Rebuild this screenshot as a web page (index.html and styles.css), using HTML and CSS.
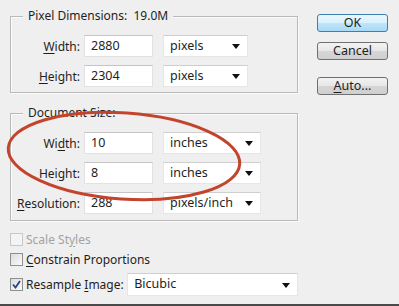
FILE: index.html
```html
<!DOCTYPE html>
<html lang="en">
<head>
    <meta charset="UTF-8" />
    <title>Image Size</title>
    <link rel="stylesheet" href="styles.css">
</head>
<body>
    <div class="dialog">
        <div class="left">
            <div class="group group-pixels">
                <span class="legend">Pixel Dimensions:&nbsp;&nbsp;19.0M</span>
                <div class="row">
                    <span class="lbl"><u>W</u>idth:</span>
                    <span class="field">2880</span>
                    <span class="select sel-short">pixels<i class="arrow"></i></span>
                </div>
                <div class="row">
                    <span class="lbl"><u>H</u>eight:</span>
                    <span class="field">2304</span>
                    <span class="select sel-short">pixels<i class="arrow"></i></span>
                </div>
            </div>

            <div class="group group-doc">
                <span class="legend">Document Size:</span>
                <div class="row">
                    <span class="lbl">Wi<u>d</u>th:</span>
                    <span class="field">10</span>
                    <span class="select">inches<i class="arrow"></i></span>
                </div>
                <div class="row">
                    <span class="lbl">Hei<u>g</u>ht:</span>
                    <span class="field">8</span>
                    <span class="select">inches<i class="arrow"></i></span>
                </div>
                <div class="row">
                    <span class="lbl"><u>R</u>esolution:</span>
                    <span class="field">288</span>
                    <span class="select">pixels/inch<i class="arrow"></i></span>
                </div>
            </div>

            <div class="checks">
                <div class="check disabled"><span class="box"></span>Scale St<u>y</u>les</div>
                <div class="check"><span class="box"></span><u>C</u>onstrain Proportions</div>
                <div class="check resample">
                    <span class="box checked">
                        <svg width="11" height="11" viewBox="0 0 11 11"><path d="M2 5.5 L4.5 8.5 L9 2" fill="none" stroke="#2a3f8f" stroke-width="1.8"/></svg>
                    </span>
                    <span class="res-lbl">Resample <u>I</u>mage:</span>
                    <span class="select sel-wide">Bicubic<i class="arrow"></i></span>
                </div>
            </div>
        </div>

        <div class="buttons">
            <span class="btn btn-default">OK</span>
            <span class="btn">Cancel</span>
            <span class="btn btn-auto"><u>A</u>uto...</span>
        </div>
    </div>
    <div class="bottom-line"></div>

    <svg class="circle" width="399" height="306" viewBox="0 0 399 306">
        <ellipse cx="124" cy="156" rx="116" ry="43" transform="rotate(4 124 156)" fill="none" stroke="#c2442c" stroke-width="3"/>
    </svg>
</body>
</html>
```

FILE: styles.css
```css
html, body {
    margin: 0;
    height: 306px;
    overflow: hidden;
}

body {
    width: 399px;
    background: #efefef;
    font-family: "Noto Sans", "Open Sans", sans-serif;
    font-size: 12px;
    color: #1e1e1e;
    position: relative;
}

u {
    text-decoration: underline;
    text-underline-offset: 2px;
}

.dialog {
    display: flex;
    padding: 14px 0 0 10px;
    height: 304px;
    box-sizing: border-box;
}

.left {
    width: 288px;
}

.group {
    position: relative;
    border: 1px solid #b9b9b9;
    box-shadow: inset 1px 1px 0 #fbfbfb, 1px 1px 0 #fbfbfb;
    padding: 18px 0 5px 0;
    display: flex;
    flex-direction: column;
    gap: 8px;
}

.group-pixels {
    margin-top: 2px;
}

.group-doc {
    margin-top: 20px;
    padding-bottom: 6px;
}

.legend {
    position: absolute;
    left: 12px;
    top: -10px;
    padding: 0 5px;
    background: #efefef;
    line-height: 18px;
}

.row {
    display: flex;
    align-items: center;
    height: 22px;
}

.lbl {
    width: 69px;
    text-align: right;
    padding-right: 4px;
}

.field {
    width: 69px;
    height: 22px;
    box-sizing: border-box;
    background: #fff;
    border: 1px solid #e2e2e2;
    border-top-color: #c4c4c4;
    padding: 0 6px;
    line-height: 20px;
    font-size: 12.5px;
}

.select {
    position: relative;
    margin-left: 10px;
    width: 98px;
    height: 22px;
    box-sizing: border-box;
    background: #fff;
    border: 1px solid #e6e6e6;
    border-top-color: #cfcfcf;
    padding: 0 6px;
    line-height: 20px;
    font-size: 12.5px;
}

.sel-short {
    width: 85px;
}

.arrow {
    position: absolute;
    right: 7px;
    top: 8px;
    width: 0;
    height: 0;
    border-left: 4px solid transparent;
    border-right: 4px solid transparent;
    border-top: 5px solid #111;
}

.checks {
    display: flex;
    flex-direction: column;
    padding-top: 8px;
}

.check {
    display: flex;
    align-items: center;
    height: 20px;
}

.check.disabled {
    color: #a3a3a3;
}

.box {
    width: 13px;
    height: 13px;
    box-sizing: border-box;
    border: 1px solid #8e8f8f;
    background: linear-gradient(135deg, #dcdcdc, #fafafa);
    margin-right: 3px;
    display: flex;
    align-items: center;
    justify-content: center;
}

.disabled .box {
    border-color: #c8c8c8;
    background: #f4f4f4;
}

.check.resample {
    height: 23px;
    margin-top: 4px;
}

.res-lbl {
    width: 99px;
}

.sel-wide {
    margin-left: 3px;
    width: 172px;
    height: 23px;
}

.sel-wide .arrow {
    top: 9px;
}

.buttons {
    display: flex;
    flex-direction: column;
    margin-left: 19px;
}

.btn {
    width: 71px;
    height: 18px;
    box-sizing: border-box;
    border: 1px solid #707070;
    border-radius: 3px;
    background: linear-gradient(#f3f3f3 0%, #e6e6e6 50%, #d6d6d6 51%, #cfcfcf 100%);
    text-align: center;
    line-height: 15px;
    margin-bottom: 10px;
    font-size: 12.5px;
}

.btn-default {
    border-color: #3c7fb1;
    background: linear-gradient(#eaf6fd 0%, #d9f0fc 50%, #bee6fd 51%, #a7d9f5 100%);
}

.btn-auto {
    margin-top: 7px;
}

.bottom-line {
    height: 2px;
    background: #4a4a4a;
}

.circle {
    position: absolute;
    left: 0;
    top: 0;
    pointer-events: none;
}
```
